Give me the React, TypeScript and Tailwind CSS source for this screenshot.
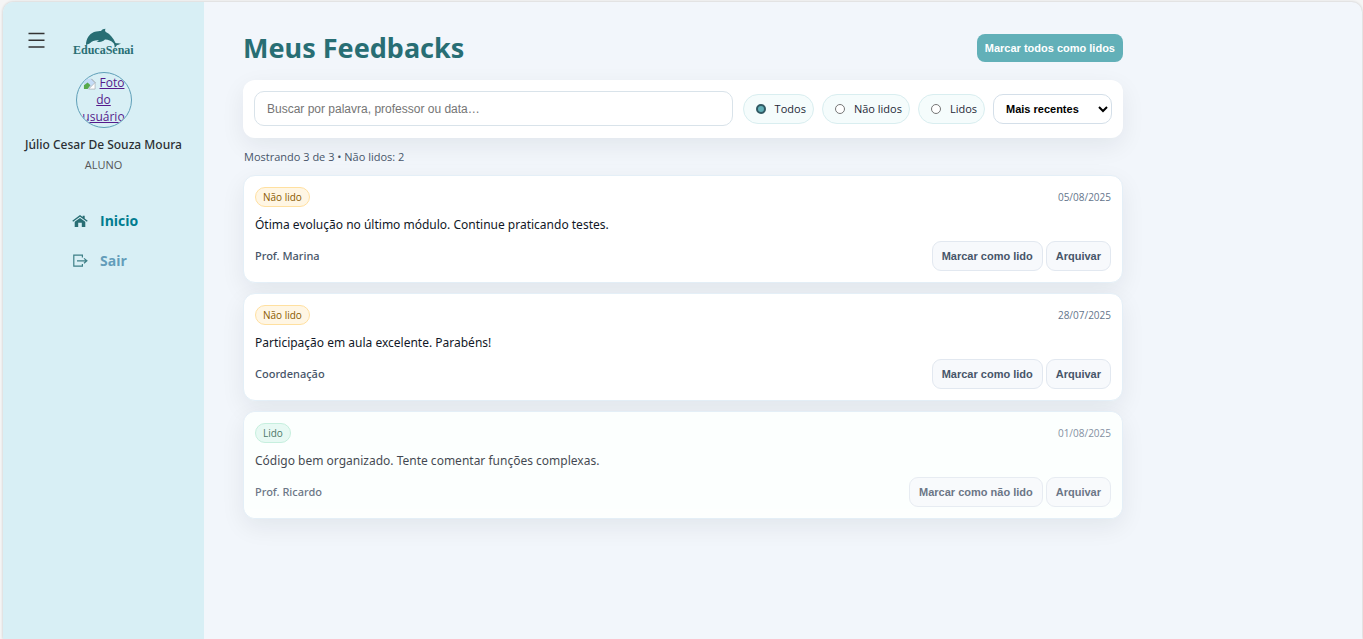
import { useState } from "react";

type Feedback = { id: number; text: string; author: string; date: string; read: boolean };

const feedbacks: Feedback[] = [
  { id: 1, text: "Ótima evolução no último módulo. Continue praticando testes.", author: "Prof. Marina", date: "05/08/2025", read: false },
  { id: 2, text: "Participação em aula excelente. Parabéns!", author: "Coordenação", date: "28/07/2025", read: false },
  { id: 3, text: "Código bem organizado. Tente comentar funções complexas.", author: "Prof. Ricardo", date: "01/08/2025", read: true },
];

const filters = ["Todos", "Não lidos", "Lidos"];

function Logo() {
  return (
    <div className="flex flex-col items-center text-[#286e74]">
      <svg width="37" height="20" viewBox="0 0 37 20" fill="currentColor" aria-hidden="true">
        <path d="M1 17C1 11 4 6 9 4C12 3 15 3 16 3C17 1.5 18.5 .8 20.5 .7C19.8 2 20 3 20.8 4C25 6 28.5 10 30.5 15C32 15.5 34 15.2 36 15.6C34 17 32.5 17 31.8 17.3C31.3 18.5 30.5 19.3 29.5 19.6C29.8 18 29.4 16.8 28.8 15.4C26 12.5 23 11.4 20 11.5C18 13.5 15 14.2 11.5 14C12.8 13.2 13.5 12.6 14 12.3C10 12 7 13 5.5 14.8C4.5 16 2.8 16.3 1 17Z" />
      </svg>
      <span className="-mt-1 font-['Liberation_Serif',serif] text-[12px] font-bold leading-3">EducaSenai</span>
    </div>
  );
}

function Sidebar() {
  return (
    <aside className="flex w-[201px] shrink-0 flex-col rounded-tl-[10px] bg-[#d8eff5] pt-[26px]">
      <div className="flex items-start gap-7 pl-[25px]">
        <button aria-label="Menu" className="mt-1 text-[#333]">
          <svg width="17" height="17" viewBox="0 0 17 17" stroke="currentColor" strokeWidth="1.6" aria-hidden="true">
            <path d="M.5 1.5h16M.5 8.3h16M.5 15h16" />
          </svg>
        </button>
        <Logo />
      </div>

      <div className="mt-4 flex flex-col items-center">
        <a
          href="#perfil"
          className="block size-14 overflow-hidden rounded-full border border-[#5f9fb8] pt-px text-center text-[12px] leading-[17px] text-[#551a8b] underline"
        >
          <svg className="mr-1 inline-block align-middle" width="13" height="13" viewBox="0 0 14 14" aria-hidden="true">
            <path d="M1 2h8l4 4v6H1z" fill="#c5dcf7" />
            <path d="M1 13V9l4-3 3 3-3 4z" fill="#58a84b" />
            <path d="M9 2l4 4v7H6l7-7z" fill="#fff" stroke="#a7adb3" strokeWidth=".8" />
          </svg>
          Foto
          <br />
          do
          <br />
          usuário
        </a>
        <p className="mt-[7px] font-['Noto_Sans',sans-serif] text-[12px] font-medium leading-5 text-[#2b2f33]">
          Júlio Cesar De Souza Moura
        </p>
        <p className="text-[11px] leading-5 text-[#555]">ALUNO</p>
      </div>

      <nav className="mt-9 flex flex-col gap-5 pl-[69px] text-[14px] font-bold leading-5">
        <a href="#inicio" className="flex items-center gap-3 text-[#007c8f]">
          <svg width="16" height="14" viewBox="0 0 16 14" fill="#286e74" aria-hidden="true">
            <path d="M8 1 10.7 3V1.7h2v2.8L15.7 6.8 14.9 7.8 8 2.8 1.1 7.8.3 6.8z" />
            <path d="M8 3.9 13.3 7.8V13h-3.5V8.7H6.2V13H2.7V7.8z" />
          </svg>
          Inicio
        </a>
        <a href="#sair" className="flex items-center gap-3 text-[#639dba]">
          <svg width="16" height="14" viewBox="0 0 16 14" fill="none" stroke="#3d7f86" strokeWidth="1.2" aria-hidden="true">
            <path d="M10.4 3.5V1.2H1.8V12.2h8.6V10M5 6.8h9.8M12 4.4l2.9 2.4L12 9.2" />
          </svg>
          Sair
        </a>
      </nav>
    </aside>
  );
}

function FeedbackCard({ item }: { item: Feedback }) {
  const button =
    "h-[30px] rounded-[9px] border border-[#e2e8f0] bg-[#f7f9fc] px-[9px] font-['Liberation_Sans',sans-serif] text-[11px] font-bold text-[#475569]";
  return (
    <article className="rounded-xl border border-[#e4eff7] bg-white shadow-[0_8px_24px_rgba(15,23,42,0.07)]">
      <div className={item.read ? "rounded-xl bg-[#fcfffe] p-[11px] opacity-80" : "p-[11px]"}>
        <div className="flex items-center justify-between">
          <span
            className={
              item.read
                ? "rounded-full border border-[#b8ecd6] bg-[#e2f8f1] px-[7px] text-[10px] leading-[18px] text-[#17563f]"
                : "rounded-full border border-[#ffe0a0] bg-[#fff6e4] px-[7px] text-[10px] leading-[18px] text-[#8a5a00]"
            }
          >
            {item.read ? "Lido" : "Não lido"}
          </span>
          <time className="text-[10px] leading-5 text-[#64748b]">{item.date}</time>
        </div>
        <p className="mb-[6px] mt-2 font-['Noto_Sans',sans-serif] text-[12px] leading-5 text-[#111827]">{item.text}</p>
        <div className="flex items-center justify-between">
          <span className="font-['Noto_Sans',sans-serif] text-[11px] font-medium text-[#475569]">{item.author}</span>
          <div className="flex gap-[3px]">
            <button className={button}>{item.read ? "Marcar como não lido" : "Marcar como lido"}</button>
            <button className={button}>Arquivar</button>
          </div>
        </div>
      </div>
    </article>
  );
}

export default function App() {
  const [filter, setFilter] = useState("Todos");
  return (
    <div className="min-h-screen bg-[#f5f5f5] pl-[3px] pr-px pt-[2px] font-['Open_Sans',sans-serif]">
      <div className="flex min-h-[calc(100vh-2px)] rounded-t-[10px] bg-[#f2f6fb] shadow-[0_0_3px_rgba(0,0,0,0.2)]">
        <Sidebar />
        <main className="min-w-0 flex-1 px-[39px] pt-6">
          <div className="max-w-[880px]">
            <header className="flex items-center justify-between pb-[10px]">
              <h1 className="font-['Noto_Sans',sans-serif] text-[27px] font-bold leading-[44px] text-[#286e74]">Meus Feedbacks</h1>
              <button className="h-7 rounded-lg bg-[#62b0b8] px-2 font-['Liberation_Sans',sans-serif] text-[11px] font-bold text-white">
                Marcar todos como lidos
              </button>
            </header>

            <section className="flex items-center gap-2 rounded-xl bg-white p-[11px] pb-3 shadow-[0_8px_24px_rgba(15,23,42,0.07)]">
              <input
                type="search"
                aria-label="Buscar feedbacks"
                placeholder="Buscar por palavra, professor ou data…"
                className="mr-[2px] h-[35px] min-w-0 flex-1 rounded-[10px] border border-[#d9e3ea] px-3 font-['Liberation_Sans',sans-serif] text-[12px] placeholder:text-[#757575]"
              />
              {filters.map((name) => (
                <label
                  key={name}
                  className="flex h-[30px] items-center gap-[9px] rounded-full border border-[#d9eef0] bg-[#f5fcfc] pl-3 pr-[7px] pt-px text-[11px] text-[#1f2937]"
                >
                  <input
                    type="radio"
                    name="filter"
                    checked={filter === name}
                    onChange={() => setFilter(name)}
                    className="size-[10px] appearance-none rounded-full border border-[#767676] bg-white checked:border-2 checked:border-[#315963] checked:bg-[#62b0b8]"
                  />
                  {name}
                </label>
              ))}
              <select
                aria-label="Ordenar"
                className="h-[30px] w-[119px] rounded-[10px] border border-[#d4dfe9] bg-white pl-2 font-['Liberation_Sans',sans-serif] text-[11px] font-bold text-black"
              >
                <option>Mais recentes</option>
                <option>Mais antigos</option>
              </select>
            </section>

            <p className="mb-[9px] mt-[10px] pl-px text-[11px] leading-[18px] text-[#475569]">Mostrando 3 de 3 • Não lidos: 2</p>

            <div className="flex flex-col gap-[10px]">
              {feedbacks.map((item) => (
                <FeedbackCard key={item.id} item={item} />
              ))}
            </div>
          </div>
        </main>
      </div>
    </div>
  );
}
